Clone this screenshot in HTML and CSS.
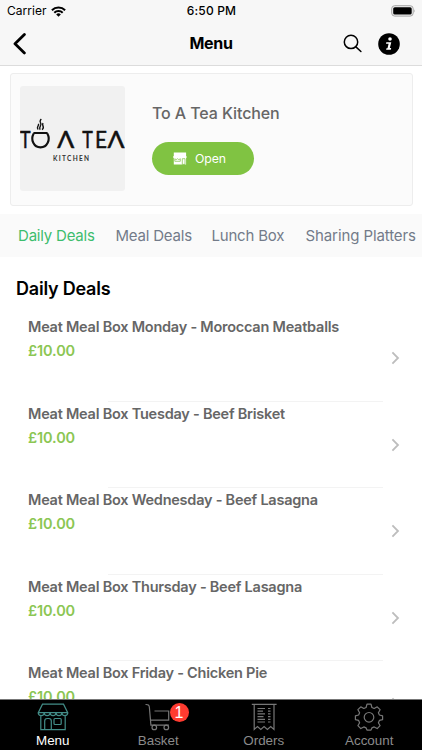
FILE: index.html
```html
<!DOCTYPE html>
<html lang="en">
<head>
<meta charset="utf-8">
<title>Menu</title>
<link rel="stylesheet" href="styles.css">
</head>
<body>
<div class="app">
  <header class="top">
    <div class="status">
      <div class="carrier"><span>Carrier</span>
        <svg width="15" height="11" viewBox="0 0 15 11"><g fill="none" stroke="#000" stroke-width="2"><path d="M.9 4.2a9.3 9.3 0 0 1 13.2 0"/><path d="M3.3 6.7a5.9 5.9 0 0 1 8.4 0"/></g><path d="M5.2 8.4a3.3 3.3 0 0 1 4.6 0L7.5 10.8z"/></svg>
      </div>
      <span class="time">6:50 PM</span>
      <svg class="battery" width="25" height="12" viewBox="0 0 25 12"><rect x=".7" y=".7" width="21.5" height="10.4" rx="3" fill="#eee" stroke="#a5a5a5"/><rect x="2.2" y="2.2" width="18.5" height="7.4" rx="1.6"/><path d="M23.3 4.2q1.5 1.7 0 3.4z" fill="#a5a5a5"/></svg>
    </div>
    <nav class="nav">
      <svg class="back" width="14" height="22" viewBox="0 0 14 22"><path d="M11.4 1.6L2 10.8l9.4 9.1" fill="none" stroke="#000" stroke-width="2.8" stroke-linecap="round" stroke-linejoin="round"/></svg>
      <h1>Menu</h1>
      <div class="actions">
        <svg width="20" height="20" viewBox="0 0 20 20"><g fill="none" stroke="#000" stroke-width="1.5" stroke-linecap="round"><circle cx="8" cy="7.9" r="6.7"/><path d="M12.9 12.9l5 4.6"/></g></svg>
        <svg width="22" height="22" viewBox="0 0 22 22"><circle cx="11" cy="11" r="10.8"/><circle cx="12" cy="6" r="1.8" fill="#fff"/><path d="M8.3 9.2h5l-1.5 5.9h1.4l-.4 1.6H8.1l.4-1.5h1l1.1-4.4H8z" fill="#fff"/></svg>
      </div>
    </nav>
  </header>

  <main class="content">
    <section class="card">
      <svg class="logo" width="105" height="105" viewBox="0 0 105 105">
        <rect width="105" height="105" rx="3" fill="#f1f1f1"/>
        <g class="wordmark"><text x="0" y="62.2" textLength="10.6" lengthAdjust="spacingAndGlyphs">T</text><text x="37.3" y="62.2" textLength="17" lengthAdjust="spacingAndGlyphs">Λ</text><text x="62.2" y="62.2" textLength="10.6" lengthAdjust="spacingAndGlyphs">T</text><text x="75" y="62.2" textLength="12" lengthAdjust="spacingAndGlyphs">E</text><text x="87.6" y="62.2" textLength="17" lengthAdjust="spacingAndGlyphs">Λ</text></g>
        <path d="M13.4 47h14.2M13.7 47.4c-3.6 6.4.2 14 6.8 14s10.4-7.6 6.8-14" fill="none" stroke="#111" stroke-width="2.1"/>
        <path d="M18.2 43.5c-2.6-2.4 1.1-3.1.3-5.7M20.2 43.8c-2.3-3 2.6-4.2.2-7.4-1-1.5.4-2.2.6-3.6M22 43.6c3.6-2.6-.8-3.7 1-6.6" fill="none" stroke="#111" stroke-width="1.4"/>
        <text class="submark" x="33" y="74.5" textLength="36">KITCHEN</text>
      </svg>
      <div class="info">
        <h2>To A Tea Kitchen</h2>
        <span class="open">
          <svg width="14" height="13" viewBox="0 0 14 13"><path d="M.8.5h12.3v3.6H.8zM.3 4.1h13.2v2H.3zM.8 6.1h12.3v6.3H.8z" fill="#fff"/><path d="M1.8 9.3V6.7l1.3 1 1.4-1 1.4 1 1.4-1v2.6zM9.3 6.7h2.7v5.7H9.3z" fill="none" stroke="#80c342" stroke-width=".7"/></svg>
          <span>Open</span>
        </span>
      </div>
    </section>

    <div class="tabs">
      <span class="tab t1 on">Daily Deals</span><span class="tab t2">Meal Deals</span><span class="tab t3">Lunch Box</span><span class="tab t4">Sharing Platters</span>
    </div>

    <h3>Daily Deals</h3>
    <div class="list">
      <div class="item"><div><p class="name">Meat Meal Box Monday - Moroccan Meatballs</p><p class="price">£10.00</p></div><svg class="chev" width="9" height="14" viewBox="0 0 9 14"><path d="M1.4 1.4L7 7l-5.6 5.6"/></svg></div>
      <div class="item"><div><p class="name">Meat Meal Box Tuesday - Beef Brisket</p><p class="price">£10.00</p></div><svg class="chev" width="9" height="14" viewBox="0 0 9 14"><path d="M1.4 1.4L7 7l-5.6 5.6"/></svg></div>
      <div class="item"><div><p class="name">Meat Meal Box Wednesday - Beef Lasagna</p><p class="price">£10.00</p></div><svg class="chev" width="9" height="14" viewBox="0 0 9 14"><path d="M1.4 1.4L7 7l-5.6 5.6"/></svg></div>
      <div class="item"><div><p class="name">Meat Meal Box Thursday - Beef Lasagna</p><p class="price">£10.00</p></div><svg class="chev" width="9" height="14" viewBox="0 0 9 14"><path d="M1.4 1.4L7 7l-5.6 5.6"/></svg></div>
      <div class="item"><div><p class="name">Meat Meal Box Friday - Chicken Pie</p><p class="price">£10.00</p></div><svg class="chev" width="9" height="14" viewBox="0 0 9 14"><path d="M1.4 1.4L7 7l-5.6 5.6"/></svg></div>
    </div>
  </main>

  <footer class="bar">
    <div class="dest active">
      <svg width="32" height="28" viewBox="0 0 32 28"><path d="M5.5 1.2h21l4.2 8.5H1.3zM1.3 9.7c0 3.8 5.9 3.8 5.9 0 0 3.8 5.9 3.8 5.9 0 0 3.8 5.9 3.8 5.9 0 0 3.8 5.9 3.8 5.9 0 0 3.8 5.8 3.8 5.8 0M3.8 12.5V26.7h24.4V12.5M7.7 26.5V18q0-2.5 2.5-2.5h1.6q2.5 0 2.5 2.5v8.5"/><rect x="17" y="15.5" width="7.2" height="6" rx="1"/></svg>
      <span>Menu</span></div>
    <div class="dest">
      <svg width="32" height="28" viewBox="0 0 32 28"><path d="M3.5 1.5q3.8-.3 3.9 3l1.5 17.7h18M8.5 17.2h18.2V8H12.5"/><circle cx="12.3" cy="24.4" r="2.3"/><circle cx="24.3" cy="24.4" r="2.3"/></svg>
      <b class="badge">1</b>
      <span>Basket</span></div>
    <div class="dest">
      <svg width="32" height="28" viewBox="0 0 32 28"><path d="M3.8 1.4h24.8M6.2 1.4v25l3.3-2.8 3.3 2.8 3.3-2.8 3.3 2.8 3.3-2.8 3.3 2.8v-25M9.5 5.5h7.5M9.5 8.2h5.5M9.5 10.9h7.5M9.5 13.6h6M9.5 16.3h7.5M9.5 19h7.5M20 5.5h2.5M20 8.2h2.5M20 10.9h2.5M20 13.6h2.5M20 16.3h2.5M20 19h2.5"/></svg>
      <span>Orders</span></div>
    <div class="dest">
      <svg width="32" height="28" viewBox="0 0 32 28"><path stroke-linejoin="round" d="M14 1.2h4l.9 3.3 2.3 1 3-1.7 2.9 2.9-1.7 3 1 2.3 3.2.8v3.8l-3.2.8-1 2.3 1.7 3-2.9 2.9-3-1.7-2.3 1-.9 2.2h-4l-.9-2.2-2.3-1-3 1.7-2.9-2.9 1.7-3-1-2.3-3.2-.8v-3.8l3.2-.8 1-2.3-1.7-3 2.9-2.9 3 1.7 2.3-1z"/><circle cx="16" cy="14.3" r="4.8"/></svg>
      <span>Account</span></div>
  </footer>
</div>
</body>
</html>
```
FILE: styles.css
```css
* { box-sizing: border-box; }
body, h1, h2, h3, p { margin: 0; }
body { background: #fff; font-family: Inter, sans-serif; }
svg { display: block; flex: none; }
span, h1, h2, h3, p { white-space: nowrap; }
.app { width: 422px; height: 750px; display: flex; flex-direction: column; overflow: hidden; }

.top { height: 66px; flex: none; background: #f7f7f7; border-bottom: 1px solid #dcdcdc; }
.status { height: 22px; display: grid; grid-template-columns: 1fr auto 1fr; align-items: center; padding: 0 6px 0 7px; font-size: 12px; line-height: 22px; }
.carrier { display: flex; align-items: center; gap: 4px; }
.carrier span { letter-spacing: .05px; }
.time { font-weight: 500; letter-spacing: .15px; }
.battery { justify-self: end; }
.nav { height: 43px; display: grid; grid-template-columns: 1fr auto 1fr; align-items: center; padding: 0 22px 0 13px; }
h1 { font-size: 16px; font-weight: 700; line-height: 43px; padding-left: 9px; letter-spacing: -.3px; }
.actions { display: flex; justify-content: flex-end; align-items: center; gap: 15px; }

.content { flex: 1; min-height: 0; overflow: hidden; }
.card { width: 403px; height: 133px; margin: 7px 0 0 9.5px; padding: 0 0 0 9px; border: 1.5px solid #ededed; border-radius: 3px; background: #fbfbfb; display: flex; align-items: flex-start; gap: 27.5px; }
.logo { margin-top: 12px; }
.wordmark { font: 400 24px Lato, sans-serif; fill: #111; stroke: #111; stroke-width: .5px; }
.submark { font: 700 6.5px Lato, sans-serif; fill: #333; }
.info { padding-top: 28px; }
h2 { font-size: 16px; font-weight: 500; line-height: 22px; letter-spacing: -.1px; color: #666; }
.open { width: 102px; height: 33px; margin-top: 17.6px; border-radius: 17px; background: #80c342; color: #fff; font-size: 12.3px; letter-spacing: -.1px; display: flex; align-items: center; padding-left: 21px; gap: 8px; }

.tabs { height: 43px; margin-top: 8px; background: #fafafa; display: flex; align-items: center; padding-left: 18px; font-size: 15px; letter-spacing: -.2px; color: #737b89; }
.tab { flex: none; }
.t1 { width: 97.5px; } .t2 { width: 96px; } .t3 { width: 94px; } .t4 { letter-spacing: -.1px; }
.on { color: #3dbd6d; }
h3 { margin: 20px 0 0 16px; font-size: 18px; font-weight: 600; line-height: 24px; letter-spacing: -.22px; }
.list { padding: 14px 22px 0 28px; }
.item { height: 86.5px; display: flex; justify-content: space-between; position: relative; }
.item::after { content: ""; position: absolute; left: 80px; right: 17px; bottom: 0; height: 1px; background: #f3f3f3; }
.name { font-size: 14.5px; font-weight: 600; line-height: 24px; letter-spacing: -.24px; color: #666; }
.price { font-size: 14.5px; font-weight: 600; line-height: 24px; letter-spacing: -.12px; color: #8bc653; }
.chev { margin-top: 36px; fill: none; stroke: #bdbdbd; stroke-width: 1.8; }

.bar { height: 51px; flex: none; border-top: 1px solid #777; background: #000; display: grid; grid-template-columns: repeat(4, 1fr); }
.dest { position: relative; display: flex; flex-direction: column; align-items: center; padding-top: 3px; color: #8b8b8b; font-family: "Liberation Sans", sans-serif; font-size: 13.4px; line-height: 20px; }
.dest svg { fill: none; stroke: #777; stroke-width: 1.2; }
.dest.active { color: #fff; }
.active svg { stroke: #438d88; }
.badge { position: absolute; left: 64px; top: 3px; width: 19px; height: 19px; border-radius: 50%; background: #ff3b30; color: #fff; text-align: center; font-size: 16px; font-weight: 400; line-height: 19px; }
```
